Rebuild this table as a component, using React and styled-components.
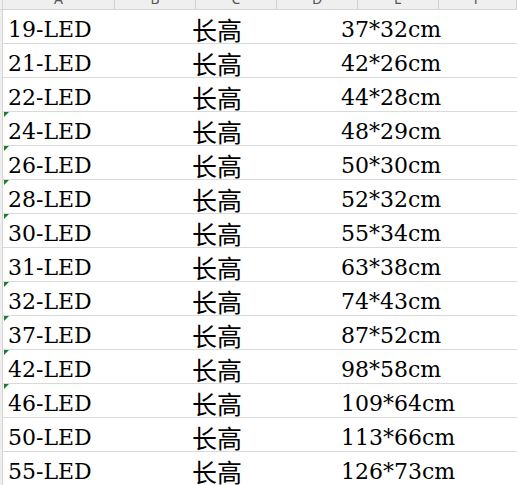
import React from "react";
import styled, { createGlobalStyle } from "styled-components";

const GlobalStyle = createGlobalStyle`
  html, body {
    margin: 0;
    padding: 0;
    background: #ffffff;
  }
`;

const Sheet = styled.div`
  width: 517px;
  height: 485px;
  overflow: hidden;
  display: grid;
  grid-template-columns: 3px 1fr;
  grid-template-rows: 10px 1fr;
  background: #ffffff;
`;

const Corner = styled.div`
  background: #efefef;
  border-right: 1px solid #d4d4d4;
  border-bottom: 1px solid #d4d4d4;
`;

const HeaderBar = styled.div`
  display: grid;
  grid-template-columns: 112px 81px 81px 81px 81px 1fr;
  background: #efefef;
  border-bottom: 1px solid #d4d4d4;
  overflow: hidden;
`;

const ColHead = styled.div`
  display: flex;
  align-items: flex-end;
  justify-content: center;
  border-right: 1px solid #d0d0d0;
  padding-bottom: 3px;
  font-family: "Noto Sans", "Liberation Sans", sans-serif;
  font-size: 14px;
  line-height: 14px;
  color: #555555;
  overflow: hidden;
`;

const RowStrip = styled.div`
  background: #efefef;
  border-right: 1px solid #d4d4d4;
`;

const Body = styled.div`
  display: flex;
  flex-direction: column;
`;

const Row = styled.div`
  position: relative;
  height: 33px;
  border-bottom: 1px solid #dadada;
  display: grid;
  grid-template-columns: 184px 149px 1fr;
  padding-left: 5px;
  color: #000000;

  &::before {
    content: "";
    display: ${(p) => (p.$flag ? "block" : "none")};
    position: absolute;
    left: 1px;
    top: 0;
    width: 0;
    height: 0;
    border-top: 5px solid #1a7d2b;
    border-right: 5px solid transparent;
  }
`;

const Cell = styled.div`
  padding-top: 7px;
  line-height: 26px;
  white-space: nowrap;
  font-family: "DejaVu Serif", "Liberation Serif", serif;
  font-size: 22px;
`;

const CjkCell = styled(Cell)`
  font-family: "Noto Sans CJK SC", sans-serif;
  font-size: 25px;
  padding-top: 6px;
`;

const rows = [
  ["19-LED", "37*32cm", false],
  ["21-LED", "42*26cm", false],
  ["22-LED", "44*28cm", false],
  ["24-LED", "48*29cm", true],
  ["26-LED", "50*30cm", true],
  ["28-LED", "52*32cm", true],
  ["30-LED", "55*34cm", true],
  ["31-LED", "63*38cm", false],
  ["32-LED", "74*43cm", true],
  ["37-LED", "87*52cm", true],
  ["42-LED", "98*58cm", true],
  ["46-LED", "109*64cm", true],
  ["50-LED", "113*66cm", false],
  ["55-LED", "126*73cm", false],
];

export default function App() {
  return (
    <>
      <GlobalStyle />
      <Sheet>
        <Corner />
        <HeaderBar>
          {["A", "B", "C", "D", "E", "F"].map((c) => (
            <ColHead key={c}>{c}</ColHead>
          ))}
        </HeaderBar>
        <RowStrip />
        <Body>
          {rows.map(([model, size, flag]) => (
            <Row key={model} $flag={flag}>
              <Cell>{model}</Cell>
              <CjkCell>长高</CjkCell>
              <Cell>{size}</Cell>
            </Row>
          ))}
        </Body>
      </Sheet>
    </>
  );
}
